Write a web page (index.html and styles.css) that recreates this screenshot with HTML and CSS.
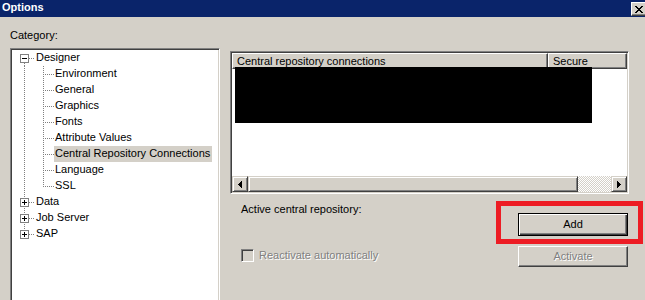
FILE: index.html
```html
<!DOCTYPE html>
<html>
<head>
<meta charset="utf-8">
<title>Options</title>
<link rel="stylesheet" href="styles.css">
</head>
<body>
<div class="titlebar">
  <span class="title">Options</span>
  <span class="close"><svg width="8" height="7" viewBox="0 0 8 7"><path d="M0 0h2v1h-2z M6 0h2v1h-2z M1 1h2v1h-2z M5 1h2v1h-2z M2 2h4v1h-4z M3 3h2v1h-2z M2 4h4v1h-4z M1 5h2v1h-2z M5 5h2v1h-2z M0 6h2v1h-2z M6 6h2v1h-2z" fill="#000"/></svg></span>
</div>
<div class="main">
  <div class="left">
    <div class="cat-label">Category:</div>
    <div class="tree">
      <div class="row"><span class="lv1 first"><span class="exp"></span></span><span class="label">Designer</span></div>
      <div class="row"><span class="guide"></span><span class="branch"></span><span class="label">Environment</span></div>
      <div class="row"><span class="guide"></span><span class="branch"></span><span class="label">General</span></div>
      <div class="row"><span class="guide"></span><span class="branch"></span><span class="label">Graphics</span></div>
      <div class="row"><span class="guide"></span><span class="branch"></span><span class="label">Fonts</span></div>
      <div class="row"><span class="guide"></span><span class="branch"></span><span class="label">Attribute Values</span></div>
      <div class="row"><span class="guide"></span><span class="branch"></span><span class="label selected">Central Repository Connections</span></div>
      <div class="row"><span class="guide"></span><span class="branch"></span><span class="label">Language</span></div>
      <div class="row"><span class="guide"></span><span class="branch last"></span><span class="label">SSL</span></div>
      <div class="row"><span class="lv1 mid"><span class="exp plus"></span></span><span class="label">Data</span></div>
      <div class="row"><span class="lv1 mid"><span class="exp plus"></span></span><span class="label">Job Server</span></div>
      <div class="row"><span class="lv1 last"><span class="exp plus"></span></span><span class="label">SAP</span></div>
    </div>
  </div>
  <div class="right">
    <div class="list">
      <div class="header">
        <span class="hcell col1">Central repository connections</span>
        <span class="hcell col2">Secure</span>
      </div>
      <div class="list-body">
        <div class="redact"></div>
      </div>
      <div class="hscroll">
        <span class="sbtn"><svg width="4" height="7" viewBox="0 0 4 7"><path d="M3 0h1v7h-1z M2 1h1v5h-1z M1 2h1v3h-1z M0 3h1v1h-1z" fill="#000"/></svg></span>
        <span class="thumb"></span>
        <span class="track"></span>
        <span class="sbtn"><svg width="4" height="7" viewBox="0 0 4 7"><path d="M0 0h1v7h-1z M1 1h1v5h-1z M2 2h1v3h-1z M3 3h1v1h-1z" fill="#000"/></svg></span>
      </div>
    </div>
    <div class="bottom">
      <div class="bl">
        <div class="active-label">Active central repository:</div>
        <div class="check-row">
          <span class="checkbox"></span>
          <span class="disabled-text">Reactivate automatically</span>
        </div>
      </div>
      <div class="br">
        <div class="redbox">
          <button class="btn default">Add</button>
        </div>
        <button class="btn activate">Activate</button>
      </div>
    </div>
  </div>
</div>
</body>
</html>
```

FILE: styles.css
```css
* {
  box-sizing: border-box;
  margin: 0;
  padding: 0;
}

html, body {
  width: 645px;
  height: 300px;
  overflow: hidden;
}

body {
  background: #d4d0c8;
  font: 11px "Liberation Sans", Arial, sans-serif;
  color: #000;
}

.titlebar {
  height: 17px;
  background: #0a246a;
  display: flex;
  align-items: flex-start;
  justify-content: space-between;
}

.title {
  color: #fff;
  font-weight: bold;
  line-height: 15px;
  padding-left: 2px;
}

.close {
  width: 16px;
  height: 14px;
  margin-top: 2px;
  margin-right: -2px;
  background: #d4d0c8;
  border: 1px solid;
  border-color: #fff #404040 #404040 #fff;
  box-shadow: inset -1px -1px #808080;
  display: flex;
  align-items: center;
  justify-content: center;
}

.close svg {
  display: block;
}

.main {
  display: flex;
  padding-left: 10px;
}

.left {
  width: 210px;
  flex: none;
}

.cat-label {
  margin-top: 11px;
  height: 16px;
  line-height: 15px;
}

.tree {
  margin-top: 4px;
  height: 262px;
  background: #fff;
  border: 1px solid;
  border-color: #808080 #fff #fff #808080;
  box-shadow: inset 1px 1px #404040, inset -1px -1px #d4d0c8;
  padding: 1px;
}

.row {
  display: flex;
  height: 16px;
  padding-left: 5px;
}

.lv1, .guide, .branch {
  flex: none;
  height: 16px;
  background-repeat: no-repeat;
}

.lv1 {
  width: 18px;
  display: flex;
  align-items: flex-start;
}

.lv1.first {
  background-image:
    repeating-linear-gradient(to right, #808080 0 1px, transparent 1px 2px),
    repeating-linear-gradient(to bottom, #808080 0 1px, transparent 1px 2px);
  background-position: 12px 8px, 7px 13px;
  background-size: 6px 1px, 1px 3px;
}

.lv1.mid {
  background-image:
    repeating-linear-gradient(to right, #808080 0 1px, transparent 1px 2px),
    repeating-linear-gradient(to bottom, #808080 0 1px, transparent 1px 2px);
  background-position: 12px 8px, 7px 0;
  background-size: 6px 1px, 1px 16px;
}

.lv1.last {
  background-image:
    repeating-linear-gradient(to right, #808080 0 1px, transparent 1px 2px),
    repeating-linear-gradient(to bottom, #808080 0 1px, transparent 1px 2px);
  background-position: 12px 8px, 7px 0;
  background-size: 6px 1px, 1px 4px;
}

.exp {
  width: 9px;
  height: 9px;
  margin-left: 3px;
  margin-top: 4px;
  border: 1px solid #808080;
  background-color: #fff;
  background-image: linear-gradient(#000, #000);
  background-repeat: no-repeat;
  background-position: 1px 3px;
  background-size: 5px 1px;
}

.exp.plus {
  background-image: linear-gradient(#000, #000), linear-gradient(#000, #000);
  background-position: 1px 3px, 3px 1px;
  background-size: 5px 1px, 1px 5px;
}

.guide {
  width: 19px;
  background-image: repeating-linear-gradient(to bottom, #808080 0 1px, transparent 1px 2px);
  background-position: 7px 0;
  background-size: 1px 16px;
}

.branch {
  width: 18px;
  background-image:
    repeating-linear-gradient(to bottom, #808080 0 1px, transparent 1px 2px),
    repeating-linear-gradient(to right, #808080 0 1px, transparent 1px 2px);
  background-position: 7px 0, 9px 8px;
  background-size: 1px 16px, 9px 1px;
}

.branch.last {
  background-size: 1px 9px, 9px 1px;
}

.label {
  line-height: 15px;
  height: 16px;
  padding: 0 2px 0 1px;
  white-space: nowrap;
}

.label.selected {
  background: #d4d0c8;
}

.right {
  margin-left: 10px;
  flex: 1;
}

.list {
  margin-top: 34px;
  width: 399px;
  height: 143px;
  border: 1px solid;
  border-color: #808080 #fff #fff #808080;
  box-shadow: inset 1px 1px #404040, inset -1px -1px #d4d0c8;
  padding: 1px;
  background: #fff;
  display: flex;
  flex-direction: column;
}

.header {
  display: flex;
  height: 16px;
  flex: none;
}

.hcell {
  height: 16px;
  background: #d4d0c8;
  border: 1px solid;
  border-color: #fff #404040 #404040 #fff;
  box-shadow: inset -1px -1px #808080;
  padding: 0 0 0 4px;
  line-height: 14px;
  overflow: hidden;
  white-space: nowrap;
}

.col1 {
  width: 316px;
}

.col2 {
  flex: 1;
}

.list-body {
  height: 107px;
  flex: none;
  display: flow-root;
}

.redact {
  position: relative;
  margin-top: -2px;
  margin-left: 3px;
  width: 357px;
  height: 56px;
  background: #000;
}

.hscroll {
  display: flex;
  height: 16px;
  flex: none;
}

.sbtn, .thumb {
  height: 16px;
  background: #d4d0c8;
  border: 1px solid;
  border-color: #d4d0c8 #404040 #404040 #d4d0c8;
  box-shadow: inset 1px 1px #fff, inset -1px -1px #808080;
}

.sbtn {
  width: 16px;
  flex: none;
  display: flex;
  align-items: center;
  justify-content: center;
}

.sbtn svg {
  display: block;
}

.thumb {
  width: 330px;
  flex: none;
}

.track {
  flex: 1;
  height: 16px;
  background-color: #fff;
  background-image: conic-gradient(#d4d0c8 25%, #fff 0 50%, #d4d0c8 0 75%, #fff 0);
  background-size: 2px 2px;
}

.bottom {
  display: flex;
}

.bl {
  padding-left: 11px;
}

.active-label {
  margin-top: 8px;
  line-height: 15px;
  height: 16px;
}

.check-row {
  margin-top: 30px;
  display: flex;
  align-items: flex-start;
  height: 16px;
}

.checkbox {
  width: 13px;
  height: 13px;
  margin-top: 1px;
  background: #d4d0c8;
  border: 1px solid;
  border-color: #808080 #fff #fff #808080;
  box-shadow: inset 1px 1px #404040, inset -1px -1px #d4d0c8;
}

.disabled-text {
  margin-left: 5px;
  line-height: 15px;
  color: #808080;
  text-shadow: 1px 1px #fff;
}

.br {
  margin-left: auto;
  margin-right: 2px;
  margin-top: 7px;
  width: 147px;
}

.redbox {
  border: 5px solid #ed1c24;
  padding: 7px 10px 3px 17px;
}

.btn {
  display: block;
  width: 110px;
  font: inherit;
  background: #d4d0c8;
  text-align: center;
  cursor: default;
}

.btn.default {
  height: 23px;
  line-height: 20px;
  padding-bottom: 1px;
  color: #000;
  border: 1px solid #000;
  box-shadow: inset 1px 1px #fff, inset -1px -1px #404040, inset -2px -2px #808080;
}

.btn.activate {
  margin-left: 22px;
  margin-top: 2px;
  height: 21px;
  line-height: 18px;
  padding-bottom: 1px;
  color: #808080;
  text-shadow: 1px 1px #fff;
  border: 1px solid;
  border-color: #fff #404040 #404040 #fff;
  box-shadow: inset -1px -1px #808080;
}
```
